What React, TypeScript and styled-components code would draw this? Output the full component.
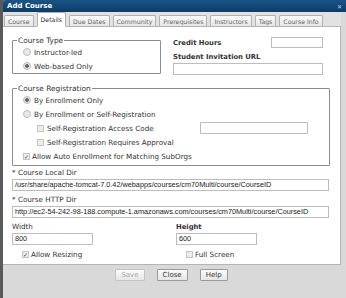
import React from "react";
import styled, { createGlobalStyle } from "styled-components";

const GlobalStyle = createGlobalStyle`
  html, body {
    margin: 0;
    padding: 0;
    background: #d8d8d8;
  }
  body {
    font-family: "DejaVu Sans", Verdana, sans-serif;
    font-size: 7.2px;
    color: #333;
  }
`;

// outer frame: dark strip on the left, dialog on the right
const Frame = styled.div`
  display: flex;
  height: 298px;
  width: 346px;
  background: #5a5a5a;
  overflow: hidden;
`;

const Dialog = styled.div`
  flex: 1;
  margin-left: 3px;
  display: flex;
  flex-direction: column;
  background: #d9d9d9;
  border-top-left-radius: 3px;
  overflow: hidden;
`;

const TitleBar = styled.div`
  height: 12px;
  display: flex;
  align-items: center;
  justify-content: space-between;
  padding: 0 4px 0 4px;
  background: linear-gradient(#1a5486, #0b3c6a);
  color: #fff;
  font-weight: bold;
  font-size: 7px;
`;

const CloseX = styled.span`
  font-size: 6px;
  color: #c8d4e0;
`;

const TabStrip = styled.div`
  display: flex;
  align-items: flex-end;
  gap: 3px;
  height: 14px;
  padding-left: 1px;
  background: #e2e2e2;
  margin-right: 5px;
`;

const Tab = styled.div<{ $active?: boolean }>`
  height: ${(p) => (p.$active ? "13px" : "10px")};
  padding: 0 3px;
  display: flex;
  align-items: center;
  white-space: nowrap;
  font-size: 6.2px;
  color: ${(p) => (p.$active ? "#333" : "#666")};
  background: ${(p) => (p.$active ? "#fff" : "linear-gradient(#fafafa, #e6e6e6)")};
  border: 1px solid #b0b0b0;
  border-bottom: ${(p) => (p.$active ? "1px solid #fff" : "none")};
  border-radius: 2px 2px 0 0;
  margin-bottom: ${(p) => (p.$active ? "-1px" : "0")};
  position: relative;
`;

const Panel = styled.div`
  height: 239px;
  margin-right: 5px;
  background: #fff;
  border: 1px solid #b4b4b4;
  border-left: none;
  padding: 9px 0 0 9px;
  box-sizing: border-box;
`;

const TopRow = styled.div`
  display: flex;
`;

const Fieldset = styled.fieldset<{ $width: number; $height: number }>`
  margin: 0;
  padding: 0 0 0 7px;
  width: ${(p) => p.$width}px;
  height: ${(p) => p.$height}px;
  box-sizing: border-box;
  border: 1px solid #8c8c8c;
  border-radius: 1px;
`;

const Legend = styled.legend`
  padding: 0 1px;
  margin-left: -3px;
  font-size: 7.4px;
  line-height: 9px;
  color: #333;
`;

const OptRow = styled.div<{ $indent?: number }>`
  display: flex;
  align-items: center;
  height: 14px;
  padding-left: ${(p) => p.$indent || 0}px;
  white-space: nowrap;
`;

const Radio = styled.span<{ $on?: boolean }>`
  width: 6px;
  height: 6px;
  border-radius: 50%;
  border: 1px solid #bcbcbc;
  background: ${(p) =>
    p.$on ? "radial-gradient(circle, #6a6a6a 0 1.6px, #e4e4e4 2px)" : "#e8e8e8"};
  margin-right: 3px;
  flex: none;
`;

const Check = styled.span<{ $on?: boolean }>`
  width: 5px;
  height: 5px;
  border: 1px solid #c4c4c4;
  background: #ececec;
  margin-right: 2px;
  flex: none;
  display: flex;
  align-items: center;
  justify-content: center;
  font-size: 6px;
  line-height: 5px;
  color: #444;
`;

const RightCol = styled.div`
  margin-left: 12px;
  width: 150px;
  padding-top: 1px;
`;

const Bold = styled.span`
  font-weight: bold;
  font-size: 6.8px;
`;

const CreditRow = styled.div`
  display: flex;
  justify-content: space-between;
  align-items: center;
  height: 11px;
`;

const Input = styled.div<{ $width: number }>`
  width: ${(p) => p.$width}px;
  height: 12px;
  box-sizing: border-box;
  border: 1px solid #bdbdbd;
  background: #fff;
  font-family: "Liberation Sans", Arial, sans-serif;
  font-size: 7.3px;
  line-height: 10px;
  padding-left: 2px;
  color: #222;
  overflow: hidden;
  white-space: nowrap;
`;

const UrlLabel = styled.div`
  margin-top: 4px;
  height: 10px;
  display: flex;
  align-items: center;
`;

const UrlInput = styled(Input)`
  margin-top: 1px;
`;

const RegBlock = styled.div`
  margin-top: 9px;
`;

const Label = styled.div<{ $bold?: boolean }>`
  height: 10px;
  line-height: 10px;
  font-weight: ${(p) => (p.$bold ? "bold" : "normal")};
  font-size: ${(p) => (p.$bold ? "6.8px" : "7.2px")};
  margin-bottom: 1px;
`;

const FieldGroup = styled.div`
  margin-top: 2px;
  margin-bottom: 4px;
`;

const SizeRow = styled.div`
  display: flex;
  gap: 83px;
`;

const ResizeRow = styled.div`
  display: flex;
  margin-top: 2px;
`;

const Half = styled.div`
  width: 164px;
`;

const ButtonBar = styled.div`
  display: flex;
  justify-content: center;
  gap: 12px;
  padding-top: 4px;
  padding-right: 6px;
`;

const Button = styled.button<{ $disabled?: boolean }>`
  height: 12px;
  padding: 0 5px;
  font-family: "DejaVu Sans", Verdana, sans-serif;
  font-size: 7px;
  line-height: 10px;
  color: ${(p) => (p.$disabled ? "#aaa" : "#333")};
  background: linear-gradient(#fbfbfb, #e6e6e6);
  border: 1px solid ${(p) => (p.$disabled ? "#c4c4c4" : "#9a9a9a")};
  border-radius: 1px;
`;

const tabs = [
  "Course",
  "Details",
  "Due Dates",
  "Community",
  "Prerequisites",
  "Instructors",
  "Tags",
  "Course Info",
];

export default function App() {
  return (
    <Frame>
      <GlobalStyle />
      <Dialog>
        <TitleBar>
          <span>Add Course</span>
          <CloseX>✕</CloseX>
        </TitleBar>
        <TabStrip>
          {tabs.map((t) => (
            <Tab key={t} $active={t === "Details"}>
              {t}
            </Tab>
          ))}
        </TabStrip>
        <Panel>
          <TopRow>
            <Fieldset $width={149} $height={38}>
              <Legend>Course Type</Legend>
              <OptRow $indent={3}>
                <Radio />
                Instructor-led
              </OptRow>
              <OptRow $indent={3}>
                <Radio $on />
                Web-based Only
              </OptRow>
            </Fieldset>
            <RightCol>
              <CreditRow>
                <Bold>Credit Hours</Bold>
                <Input $width={52} style={{ height: 11 }} />
              </CreditRow>
              <UrlLabel>
                <Bold>Student Invitation URL</Bold>
              </UrlLabel>
              <UrlInput $width={150} />
            </RightCol>
          </TopRow>

          <RegBlock>
            <Fieldset $width={318} $height={82}>
              <Legend>Course Registration</Legend>
              <OptRow $indent={3}>
                <Radio $on />
                By Enrollment Only
              </OptRow>
              <OptRow $indent={3}>
                <Radio />
                By Enrollment or Self-Registration
              </OptRow>
              <OptRow $indent={17}>
                <Check />
                <span style={{ marginLeft: 1 }}>Self-Registration Access Code</span>
                <Input $width={108} style={{ marginLeft: 46 }} />
              </OptRow>
              <OptRow $indent={17}>
                <Check />
                <span style={{ marginLeft: 1 }}>Self-Registration Requires Approval</span>
              </OptRow>
              <OptRow $indent={3}>
                <Check $on>✓</Check>
                Allow Auto Enrollment for Matching SubOrgs
              </OptRow>
            </Fieldset>
          </RegBlock>

          <FieldGroup>
            <Label>* Course Local Dir</Label>
            <Input $width={317}>
              /usr/share/apache-tomcat-7.0.42/webapps/courses/cm70Multi/course/CourseID
            </Input>
          </FieldGroup>
          <FieldGroup>
            <Label>* Course HTTP Dir</Label>
            <Input $width={317}>
              http://ec2-54-242-98-188.compute-1.amazonaws.com/courses/cm70Multi/course/CourseID
            </Input>
          </FieldGroup>
          <SizeRow>
            <div>
              <Label>Width</Label>
              <Input $width={81}>800</Input>
            </div>
            <div>
              <Label $bold>Height</Label>
              <Input $width={81}>600</Input>
            </div>
          </SizeRow>
          <ResizeRow>
            <Half>
              <OptRow $indent={10}>
                <Check $on>✓</Check>
                Allow Resizing
              </OptRow>
            </Half>
            <OptRow $indent={10}>
              <Check />
              Full Screen
            </OptRow>
          </ResizeRow>
        </Panel>
        <ButtonBar>
          <Button $disabled>Save</Button>
          <Button>Close</Button>
          <Button>Help</Button>
        </ButtonBar>
      </Dialog>
    </Frame>
  );
}
